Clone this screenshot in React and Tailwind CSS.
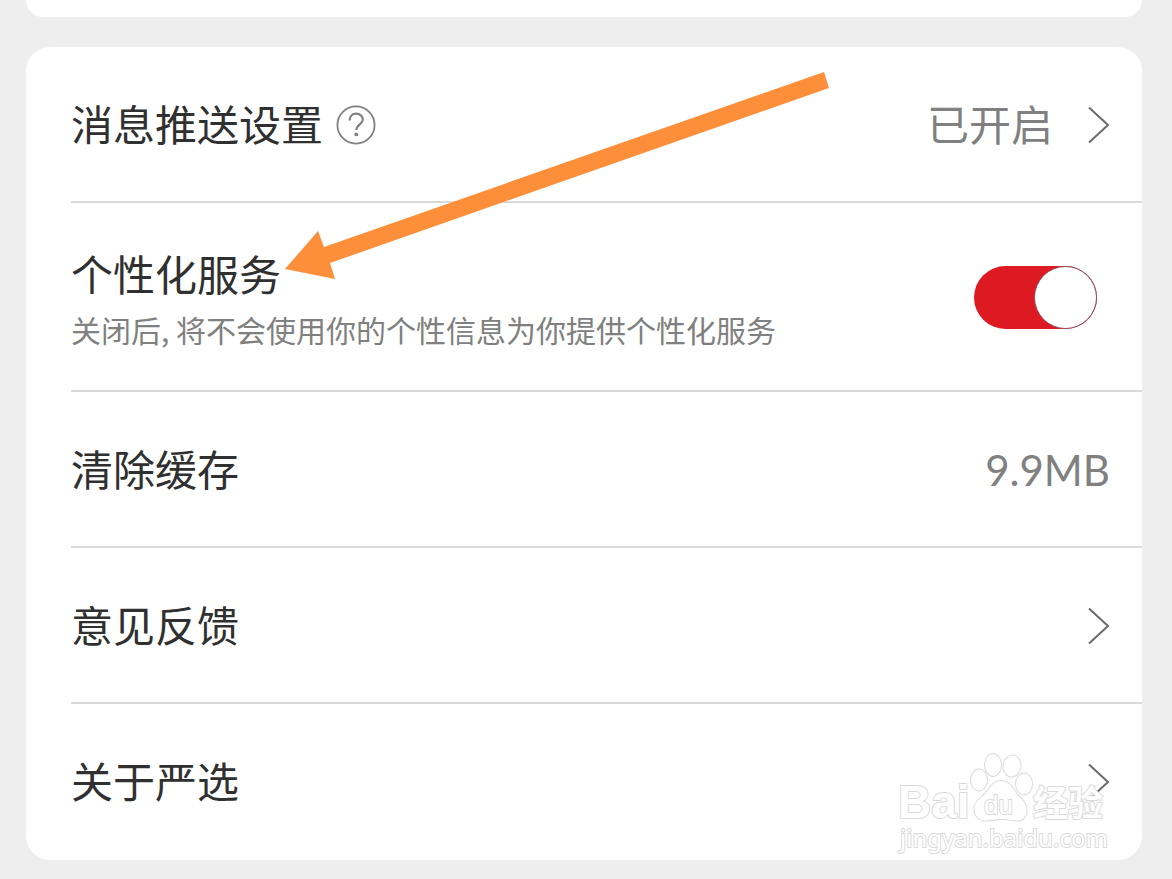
import React, { useState } from 'react';

function Chevron() {
  return (
    <svg width="24" height="38" viewBox="0 0 24 38" fill="none" className="shrink-0" aria-hidden="true">
      <path d="M3 1.5 L22 19 L3 36.5" stroke="#6b6b6b" strokeWidth="2" />
    </svg>
  );
}

function HelpIcon() {
  return (
    <svg width="40" height="40" viewBox="0 0 40 40" fill="none" aria-hidden="true">
      <circle cx="20" cy="20" r="18.6" stroke="#808080" strokeWidth="1.8" />
      <path
        d="M13.6 15.6 C13.6 11.2 16.4 8.6 20.2 8.6 C24 8.6 26.8 11.2 26.8 14.6 C26.8 19.4 20.4 19.6 20.4 25"
        stroke="#808080"
        strokeWidth="2.2"
      />
      <circle cx="20.3" cy="29.4" r="1.9" fill="#808080" />
    </svg>
  );
}

function Arrow() {
  return (
    <svg
      width="548"
      height="212"
      viewBox="0 0 548 212"
      className="absolute left-[257px] top-[23px] pointer-events-none"
      aria-hidden="true"
    >
      <path d="M2 199 L35 161 L41 177 L541 2 L546 18 L47 193 L52 209 Z" fill="#fd8f3b" />
    </svg>
  );
}

function Watermark() {
  return (
    <svg
      width="220"
      height="108"
      viewBox="0 0 220 108"
      className="absolute right-[27px] bottom-[2px] pointer-events-none"
      fill="#ffffff"
      stroke="#dadada"
      strokeWidth="2"
      paintOrder="stroke"
      strokeLinejoin="round"
      aria-hidden="true"
    >
      <text x="3" y="68" fontSize="46" fontWeight="700" fontFamily="Liberation Sans, sans-serif">
        Bai
      </text>
      <ellipse cx="84" cy="30" rx="8" ry="10.5" />
      <ellipse cx="98" cy="15" rx="8" ry="11" />
      <ellipse cx="117" cy="16" rx="8.5" ry="10.5" transform="rotate(8 117 16)" />
      <ellipse cx="129" cy="34" rx="8" ry="10.5" />
      <path d="M106 31 C98 31 95 38 90 44 C85 49 79 52 79.5 60 C80 68 86 71 93 70.5 C99 70 102 69 107 69 C113 69 118 71 123 70.5 C129 70 132 65 131.5 59 C131 52 125 48 121 43 C117 37 114 31 106 31 Z" />
      <text x="89" y="64" fontSize="26" fontFamily="Liberation Sans, sans-serif">
        du
      </text>
      <text x="138" y="66" fontSize="35" fontWeight="700" fontFamily="Noto Sans CJK SC, sans-serif">
        经验
      </text>
      <text x="5" y="97" fontSize="24" fontFamily="Noto Sans, sans-serif">
        jingyan.baidu.com
      </text>
    </svg>
  );
}

function Title({ children }) {
  return <span className="text-[42px] leading-[68px] text-[#303030]">{children}</span>;
}

const rowClass = 'flex w-full items-center justify-between pt-[44px] pb-[42px] pr-[32px] text-left';

function App() {
  const [personalized, setPersonalized] = useState(true);

  return (
    <div className="min-h-screen bg-[#eeeeee] pl-[26px] pr-[30px] pb-[19px] font-['Lato','Noto_Sans_CJK_SC',sans-serif]">
      {/* End of the previous settings group */}
      <div className="h-[17px] rounded-b-3xl bg-white" />

      <div className="relative mt-[30px] rounded-3xl bg-white pl-[45px] pb-[2px]">
        <ul className="divide-y-2 divide-[#d9d9d9]">
          <li className={rowClass}>
            <div className="flex items-center gap-[13px]">
              <Title>消息推送设置</Title>
              <button type="button" aria-label="帮助">
                <HelpIcon />
              </button>
            </div>
            <button type="button" className="flex items-center gap-[33px]">
              <span className="text-[42px] leading-[68px] text-[#808080]">已开启</span>
              <Chevron />
            </button>
          </li>

          <li className="flex items-center justify-between pt-[38px] pb-[36px] pr-[45px]">
            <label htmlFor="personalized" className="flex flex-col pb-[5px]">
              <Title>个性化服务</Title>
              <span className="font-['Noto_Sans_CJK_SC',sans-serif] text-[30px] leading-[40px] text-[#808080]">
                关闭后, 将不会使用你的个性信息为你提供个性化服务
              </span>
            </label>
            <span className="relative flex shrink-0">
              <input
                id="personalized"
                type="checkbox"
                role="switch"
                checked={personalized}
                onChange={(e) => setPersonalized(e.target.checked)}
                className="peer h-[63px] w-[123px] appearance-none rounded-full bg-[#cccccc] checked:bg-[#dd1a21]"
              />
              <span className="pointer-events-none absolute left-0 top-0 h-[63px] w-[63px] rounded-full border border-[#8f4a58] bg-white peer-checked:left-auto peer-checked:right-0" />
            </span>
          </li>

          <li>
            <button type="button" className={rowClass}>
              <Title>清除缓存</Title>
              <span className="text-[42px] leading-[68px] text-[#808080]">9.9MB</span>
            </button>
          </li>

          <li>
            <button type="button" className={rowClass}>
              <Title>意见反馈</Title>
              <Chevron />
            </button>
          </li>

          <li>
            <button type="button" className={rowClass}>
              <Title>关于严选</Title>
              <Chevron />
            </button>
          </li>
        </ul>

        <Arrow />
        <Watermark />
      </div>
    </div>
  );
}

export default App;
